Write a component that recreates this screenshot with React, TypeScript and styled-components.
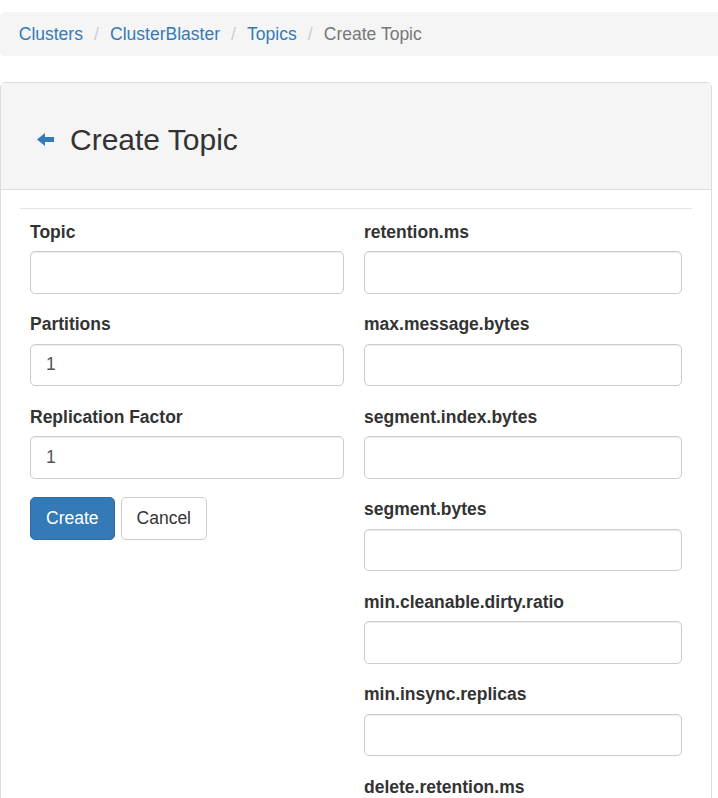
import React from "react";
import styled, { createGlobalStyle } from "styled-components";

const Global = createGlobalStyle`
  html, body { margin: 0; padding: 0; overflow: hidden; background: #fff; }
  body {
    font-family: "Liberation Sans", Arial, sans-serif;
    font-size: 17.5px;
    line-height: 25px;
    color: #333;
  }
  * { box-sizing: border-box; }
`;

const Page = styled.div`
  width: 712px;
  padding-top: 12px;
`;

const Breadcrumb = styled.ol`
  list-style: none;
  margin: 0 -30px 26px 0;
  padding: 9.5px 18.75px;
  background: #f5f5f5;
  border-radius: 5px;
  display: flex;
  align-items: center;
  height: 44px;
`;

const Crumb = styled.li<{ $active?: boolean }>`
  display: inline-block;
  color: ${(p) => (p.$active ? "#777" : "#337ab7")};
  &:not(:first-child)::before {
    content: "/\\00a0";
    color: #ccc;
    padding: 0 6.25px 0 6.25px;
    margin-left: 4.9px;
  }
`;

const CrumbLink = styled.a`
  color: #337ab7;
  text-decoration: none;
`;

const Panel = styled.div`
  border: 1px solid #ddd;
  border-radius: 5px;
  background: #fff;
  height: 760px;
`;

const PanelHeading = styled.div`
  background: #f5f5f5;
  border-bottom: 1px solid #ddd;
  border-radius: 4px 4px 0 0;
  padding: 40px 36px 33px;
  display: flex;
  align-items: center;
`;

const BackLink = styled.a`
  display: flex;
  align-items: center;
  color: #337ab7;
  margin-right: 15px;
  margin-top: 1px;
`;

const Title = styled.h3`
  margin: 0;
  font-size: 30px;
  line-height: 33px;
  font-weight: 400;
  color: #333;
`;

const PanelBody = styled.div`
  padding: 18px 19px;
`;

const Rule = styled.hr`
  margin: 0 0 10.75px;
  border: 0;
  border-top: 1px solid #e3e3e3;
`;

const FormGrid = styled.div`
  display: grid;
  grid-template-columns: 314px 318px;
  column-gap: 20px;
  padding-left: 10px;
  align-items: start;
`;

const Column = styled.div`
  display: flex;
  flex-direction: column;
`;

const Group = styled.div`
  margin-bottom: 18.75px;
`;

const Label = styled.label`
  display: block;
  font-weight: 700;
  line-height: 25px;
  margin-bottom: 6.25px;
  color: #333;
`;

const Input = styled.input`
  display: block;
  width: 100%;
  height: 42.5px;
  padding: 0 15px;
  font-family: inherit;
  font-size: 17.5px;
  color: #555;
  background: #fff;
  border: 1px solid #ccc;
  border-radius: 5px;
  box-shadow: inset 0 1px 1px rgba(0, 0, 0, 0.075);
  outline: none;
`;

const Buttons = styled.div`
  display: flex;
  gap: 6px;
`;

const Button = styled.button<{ $primary?: boolean }>`
  height: 42.5px;
  padding: 0 15px;
  font-family: inherit;
  font-size: 17.5px;
  line-height: 25px;
  border-radius: 5px;
  border: 1px solid ${(p) => (p.$primary ? "#2e6da4" : "#ccc")};
  background: ${(p) => (p.$primary ? "#337ab7" : "#fff")};
  color: ${(p) => (p.$primary ? "#fff" : "#333")};
  cursor: pointer;
`;

const ArrowLeft = () => (
  <svg width="18" height="14" viewBox="0 0 18 14" aria-hidden="true">
    <path d="M0 6.5 L8 0 L8 4 L17 4 L17 9 L8 9 L8 13 Z" fill="currentColor" />
  </svg>
);

const leftFields = [
  { label: "Topic", value: "" },
  { label: "Partitions", value: "1" },
  { label: "Replication Factor", value: "1" },
];

const rightFields = [
  "retention.ms",
  "max.message.bytes",
  "segment.index.bytes",
  "segment.bytes",
  "min.cleanable.dirty.ratio",
  "min.insync.replicas",
  "delete.retention.ms",
];

export default function App() {
  return (
    <>
      <Global />
      <Page>
        <Breadcrumb>
          <Crumb>
            <CrumbLink href="#">Clusters</CrumbLink>
          </Crumb>
          <Crumb>
            <CrumbLink href="#">ClusterBlaster</CrumbLink>
          </Crumb>
          <Crumb>
            <CrumbLink href="#">Topics</CrumbLink>
          </Crumb>
          <Crumb $active>Create Topic</Crumb>
        </Breadcrumb>
        <Panel>
          <PanelHeading>
            <BackLink href="#">
              <ArrowLeft />
            </BackLink>
            <Title>Create Topic</Title>
          </PanelHeading>
          <PanelBody>
            <Rule />
            <FormGrid>
              <Column>
                {leftFields.map((f) => (
                  <Group key={f.label}>
                    <Label>{f.label}</Label>
                    <Input defaultValue={f.value} />
                  </Group>
                ))}
                <Buttons>
                  <Button $primary>Create</Button>
                  <Button>Cancel</Button>
                </Buttons>
              </Column>
              <Column>
                {rightFields.map((l) => (
                  <Group key={l}>
                    <Label>{l}</Label>
                    <Input />
                  </Group>
                ))}
              </Column>
            </FormGrid>
          </PanelBody>
        </Panel>
      </Page>
    </>
  );
}
